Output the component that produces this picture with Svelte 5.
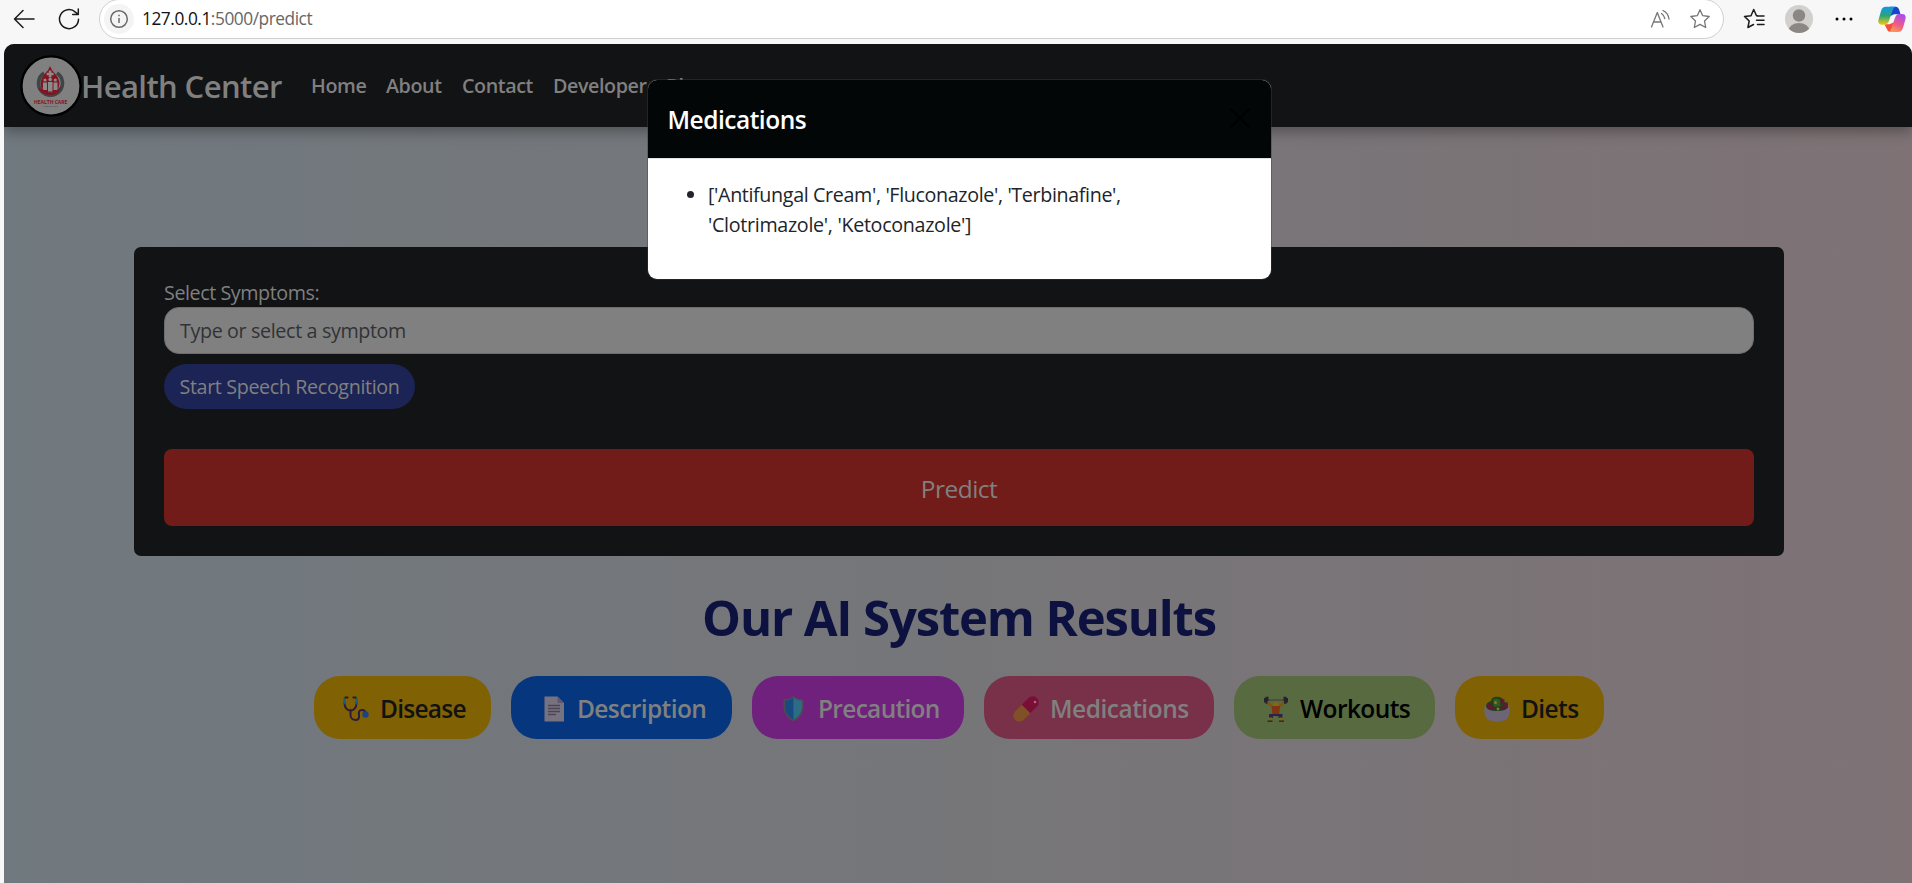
<script lang="ts">
  const nav = [
    { t: 'Home', w: 55 },
    { t: 'About', w: 56 },
    { t: 'Contact', w: 71 },
    { t: 'Developer', w: 93 },
    { t: 'Blog', w: 42 },
  ];
  const pills = [
    { t: 'Disease', c: 'disease', icon: 'steth' },
    { t: 'Description', c: 'description', icon: 'doc' },
    { t: 'Precaution', c: 'precaution', icon: 'shield' },
    { t: 'Medications', c: 'medications', icon: 'pill' },
    { t: 'Workouts', c: 'workouts', icon: 'lift' },
    { t: 'Diets', c: 'diets', icon: 'salad' },
  ];
</script>

<div class="window">
  <header class="toolbar">
    <svg class="ic back" width="22" height="20" viewBox="0 0 22 20"><path d="M21 10H1.5M10 1.5 1.5 10l8.500 8.500" /></svg>
    <svg class="ic reload" width="22" height="22" viewBox="0 0 22 22"><path d="M20.500 11.200A9.500 9.500 0 1 1 17.400 4.100L20 6.300M20.300 1v5.500h-5.600" /></svg>
    <div class="address">
      <span class="info"><svg width="20" height="20" viewBox="0 0 20 20"><circle cx="10" cy="10" r="8.300" /><path d="M10 9v5M10 5.700v1.600" /></svg></span>
      <span class="url"><b>127.0.0.1</b>:5000/predict</span>
      <svg class="read" width="20" height="20" viewBox="0 0 20 20"><path d="M1.500 18 7.300 3.500 13 18M3.500 13h7.500M11.500 4.500a8 8 0 0 1 3.300 5M13 1.500a11 11 0 0 1 6 8.500" /></svg>
      <svg class="star" width="22" height="22" viewBox="0 0 22 22"><path d="m11 1.800 2.700 5.900 6.500.8-4.700 4.500 1.200 6.500-5.700-3.100-5.700 3.100 1.200-6.500L1.800 8.500l6.500-.8z" /></svg>
    </div>
    <svg class="ic favs" width="22" height="22" viewBox="0 0 22 22"><path d="M14.500 7.800h-1L10.700 1.500 8 7.700l-6.500.7 4.700 4.600-1.300 6.500 5.600-3M14 8h7M13.500 12.200H21M14.500 16.500H21" /></svg>
    <svg class="avatar" width="28" height="28" viewBox="0 0 28 28"><defs><clipPath id="av"><circle cx="14" cy="14" r="14" /></clipPath></defs><g clip-path="url(#av)"><path fill="#d2d0cd" d="M0 0h28v28H0z" /><circle cx="14" cy="10.500" r="6.200" fill="#8b8785" /><ellipse cx="14" cy="26" rx="10.500" ry="8" fill="#8b8785" /></g></svg>
    <svg class="dots" width="18" height="4" viewBox="0 0 18 4"><circle cx="2" cy="2" r="1.500" /><circle cx="9" cy="2" r="1.500" /><circle cx="16" cy="2" r="1.500" /></svg>
    <svg class="copilot" width="28" height="27" viewBox="0 0 28 27">
      <defs>
        <linearGradient id="ca" x1="0" y1="0" x2="0" y2="1"><stop offset="0" stop-color="#1495e8" /><stop offset=".5" stop-color="#2aa57a" /><stop offset="1" stop-color="#f4c90c" /></linearGradient>
        <linearGradient id="cb" x1=".7" y1="0" x2=".3" y2="1"><stop offset="0" stop-color="#a54df0" /><stop offset=".55" stop-color="#ee5a8c" /><stop offset="1" stop-color="#ff9a4c" /></linearGradient>
      </defs>
      <path fill="#1747c8" d="M12 .8h6q2.200 0 3 2.500l1.500 5h-6.500l-4 2z" />
      <path fill="#f0503c" d="M6.500 18.200h5l4.500-2-2 9.800h-2q-2.300 0-3-2.700z" />
      <path fill="url(#ca)" d="M8 .8h9.500q-2 .4-3 4l-3.500 10q-1.200 3.900-4.500 3.900H4Q-.5 18.700.5 13.700L3 5Q4.200.8 8 .8z" />
      <path fill="url(#cb)" d="M20 26h-9.500q2-.4 3-4L17 11.800q1.200-3.900 4.500-3.900H24q4.400 0 3.500 5L25 21.800Q23.800 26 20 26z" />
    </svg>
  </header>

  <div class="page">
    <nav class="navbar">
      <svg class="logo" width="62" height="62" viewBox="0 0 62 62">
        <circle cx="31" cy="31" r="29.600" fill="#808080" stroke="#000" stroke-width="2.400" />
        <path d="M24 18a12 12 0 1 0 13 0" fill="none" stroke="#3f4446" stroke-width="3.600" />
        <path fill="#82131f" d="M30 11q1.200 3.500 4.500 7 5 5.500 5 10.500a9.500 9.500 0 0 1-19 0q0-5 5-10.500Q29 14.500 30 11z" />
        <path fill="#8b8b8b" d="M28.800 15.500h2.600v2.200h2.200v2.600h-2.200v2.200h-2.600v-2.200h-2.200v-2.600h2.200z" />
        <g fill="#8b8b8b"><circle cx="25" cy="25" r="1.600" /><circle cx="30.200" cy="24.500" r="1.800" /><circle cx="35.300" cy="25" r="1.600" /><path d="M23 27.500h4v7.500h-4zM28 27h4.500v9.500H28zM33.500 27.500h4v7.500h-4z" /></g>
        <path d="M18 33q8 2 11 5 6 0 12-7-2 9-11 9-8 0-12-7z" fill="#82131f" />
        <text x="30.500" y="48.500" text-anchor="middle" class="logo-name" textLength="33">HEALTH CARE</text>
        <text x="30.500" y="52.300" text-anchor="middle" class="logo-tag" textLength="15">Medical Clinic</text>
      </svg>
      <span class="brand">Health Center</span>
      <div class="links">
        {#each nav as n}<a href="#top" style="width:{n.w}px">{n.t}</a>{/each}
      </div>
    </nav>

    <main>
      <section class="card">
        <span class="label">Select Symptoms:</span>
        <div class="field">Type or select a symptom</div>
        <button class="speech">Start Speech Recognition</button>
        <button class="predict">Predict</button>
      </section>

      <h1>Our AI System Results</h1>

      <div class="pills">
        {#each pills as p}
          <button class="pill {p.c}">
            <svg width="26" height="26" viewBox="0 0 26 26">
              {#if p.icon === 'steth'}
                <g fill="none" stroke-linecap="round">
                  <path stroke="#2d1c3f" stroke-width="2" d="M7.500 14v5a5 5 0 0 0 5 5c3 0 4-2 3.500-5s0-5 3-5 3.500 2 3.500 4" />
                  <path stroke="#2d1c3f" stroke-width="2" d="M1.500 7c0 5 3 7.500 6 7.500s6-2.500 6-7.500" />
                  <path stroke="#1d5a80" stroke-width="2.200" d="M1.500 7.500v-5M13.500 7.500v-5" />
                  <path stroke="#222" stroke-width="2.200" d="M2.500 1.500h2M10.500 1.500h2" />
                </g>
                <circle cx="22.500" cy="18.500" r="3.200" fill="#1b4387" />
              {:else if p.icon === 'doc'}
                <path fill="#77727f" d="M.5.500h13L20 7v18.500H.5z" /><path fill="#5e586a" d="M13.500.5 20 7h-6.500z" />
                <path stroke="#4b4558" stroke-width="1.300" d="M4 9.500h12M4 12.500h12M4 15.500h12M4 18.500h8" />
              {:else if p.icon === 'shield'}
                <path fill="#4f4b50" d="M10.500 0Q14 3 20.500 3.500V12q-1 9-10 13.500Q1.500 21 .5 12V3.500Q7 3 10.500 0z" />
                <path fill="#174c81" d="M10.500 1.800v22Q3 19.500 2 12V4.800q5-.3 8.500-3z" /><path fill="#2c6c87" d="M10.500 1.800v22Q18 19.500 19 12V4.800q-5-.3-8.500-3z" />
              {:else if p.icon === 'pill'}
                <g transform="rotate(45 13 13)">
                  <path fill="#7a0f36" d="M7 13V3.500a6 6 0 0 1 12 0V13z" /><path fill="#805027" d="M7 13v9.500a6 6 0 0 0 12 0V13z" />
                </g>
                <circle cx="22" cy="6" r="1.300" fill="#a66c85" />
              {:else if p.icon === 'lift'}
                <path stroke="#44404a" stroke-width="1.200" d="M2 4h22" /><path fill="#26222d" d="M1 2h1.500V.8h3v7h-3V6.500H1zM25 2h-1.500V.8h-3v7h3V6.500H25z" />
                <path fill="none" stroke="#80540f" stroke-width="2.200" d="M5.500 5v3l4 2.500M20 5v3l-4 2.500" />
                <circle cx="12.800" cy="8.500" r="2.800" fill="#86651a" /><path fill="#803510" d="M8.500 10h8.600l-1 8.500H9.500z" />
                <path fill="#29234a" d="M6 18h13.500v4h-4v-2h-5.500v2H6z" /><path fill="#80650f" d="M6 21.500h3.200V25H6zM16.300 21.500h3.200V25h-3.200z" /><path fill="#222" d="M4.500 24.500h5v1.300h-5zM16 24.500h5v1.300h-5z" />
              {:else}
                <path fill="#6d6576" d="M.5 10q2-1.500 12.500-1.500T25.500 10q1 11-4 14-3.500 1.800-8.500 1.800T4.500 24q-5-3-4-14z" />
                <path fill="#1f3f1d" d="M2 10.500q0-4 5-5.500 1-4.200 6-4.200T19 5q5 1.500 5 5.500-1 4.500-11 4.500T2 10.500z" />
                <path fill="#2d5b25" d="M9 4q3-3 7 0l1 6-7 1z" />
                <path fill="#6a1434" d="m3.500 7 9 5.500-8 .5zM23.500 5.500 16 13l8-1zM17 2l4 2-5 5z" /><circle cx="11.500" cy="6.500" r="1.500" fill="#8a7a20" /><circle cx="14" cy="13" r="1.400" fill="#8a7a20" />
              {/if}
            </svg>
            <span>{p.t}</span>
          </button>
        {/each}
      </div>
    </main>

    <div class="modal">
      <div class="modal-head">
        <span>Medications</span>
        <svg width="22" height="20" viewBox="0 0 22 20"><path d="m1.500.5 19 19m0-19-19 19" /></svg>
      </div>
      <ul><li><span class="l1">['Antifungal Cream', 'Fluconazole', 'Terbinafine',</span><br /><span class="l2">'Clotrimazole', 'Ketoconazole']</span></li></ul>
    </div>
  </div>
</div>

<style>
  :global(body) { margin: 0; background: #f7f7f7; overflow: hidden; }
  .window { width: 1912px; height: 883px; display: flex; flex-direction: column; font-family: "Open Sans", "Noto Sans", sans-serif; font-size: 19.700px; letter-spacing: -.36px; }
  .window *, .window { box-sizing: border-box; }
  button { border: 0; margin: 0; padding: 0; font: inherit; letter-spacing: inherit; }
  .toolbar { height: 44px; flex: none; display: flex; align-items: center; padding: 0 0 6px 13px; background: #f7f7f7; }
  .toolbar svg { flex: none; }
  .ic path, .read path, .star path { fill: none; stroke: #1b1b1b; stroke-width: 1.500; stroke-linecap: round; stroke-linejoin: round; }
  .reload { margin-left: 23px; }
  .address { margin-left: 19px; width: 1625px; height: 40px; margin-top: -1px; border: 1.500px solid #d0d0d0; border-radius: 20px; background: #fff; display: flex; align-items: center; padding-left: 4px; }
  .info { width: 30px; height: 30px; border-radius: 50%; background: #f4f4f4; display: grid; place-items: center; }
  .info svg { fill: none; stroke: #6a6a6a; stroke-width: 1.500; }
  .url { margin-left: 8px; color: #666; font-size: 17.300px; letter-spacing: -.45px; }
  .url b { font-weight: 400; color: #111; }
  .read { margin-left: auto; }
  .read path, .star path { stroke: #767676; stroke-width: 1.300; }
  .star { margin: 0 12px 0 19px; }
  .favs { margin-left: 19px; }
  .avatar { margin-left: 20px; }
  .dots { margin-left: 22px; }
  .copilot { margin-left: 25px; }
  .page { position: relative; flex: 1; margin-left: 4px; border-radius: 10px 10px 0 0; overflow: hidden; background: linear-gradient(to right, #70797f, #767679 50%, #7e7275); }
  .navbar { height: 83px; background: #111315; display: flex; align-items: center; padding-left: 16px; box-shadow: 0 5px 12px rgba(0, 0, 0, .3); color: #808080; }
  .logo { flex: none; margin: 0 1px 0 -.5px; }
  .brand { width: 230px; margin-left: -1.500px; font-size: 31px; font-weight: 600; letter-spacing: -.6px; white-space: nowrap; }
  .logo-name { font: 700 5px "Open Sans", sans-serif; fill: #82131f; }
  .logo-tag { font: 2.500px "Open Sans", sans-serif; fill: #444; }
  .links { display: flex; gap: 20px; }
  .links a { color: inherit; text-decoration: none; font-size: 19.700px; font-weight: 600; letter-spacing: -.4px; white-space: nowrap; padding-bottom: 1px; }
  main { display: flex; flex-direction: column; align-items: center; padding: 120px 0 0 2px; }
  .card { width: 1650px; height: 309px; border-radius: 7px; background: #111315; padding: 30px; display: flex; flex-direction: column; align-items: flex-start; color: #808080; }
  .label { height: 30px; line-height: 32px; letter-spacing: -.42px; }
  .field { width: 100%; height: 47px; border: 1px solid #6b6d6f; border-radius: 15px; background: #808080; color: #303336; padding-left: 15px; line-height: 46px; }
  .speech { margin-top: 10px; width: 251px; height: 45px; border-radius: 23px; background: #1c2455; color: #808080; }
  .predict { margin-top: 40px; width: 100%; height: 77px; border-radius: 8px; background: #711c19; color: #808080; font-size: 24.500px; letter-spacing: -.5px; padding: 2px 0 0; }
  h1 { margin: 27px 0 0; height: 68px; line-height: 68px; font-size: 49px; font-weight: 700; letter-spacing: -1.130px; color: #0d113f; white-space: nowrap; }
  .pills { margin-top: 25px; display: flex; gap: 20px; }
  .pill { height: 63px; border-radius: 26px; display: flex; align-items: center; padding-left: 30px; font-size: 24.500px; font-weight: 600; letter-spacing: -.6px; color: #808080; white-space: nowrap; }
  .pill svg { flex: none; margin: 3px 0 0 -1px; }
  .pill span { margin-left: 11px; padding-top: 2px; }
  .disease { width: 177px; background: #806103; color: #101214; letter-spacing: -.75px; }
  .description { width: 221px; background: #06377e; padding-left: 34px; }
  .description span { margin-left: 7px; }
  .precaution { width: 212px; background: #70207d; padding-left: 32px; letter-spacing: -.7px; }
  .precaution span { margin-left: 9px; }
  .medications { width: 230px; background: #783149; letter-spacing: -.5px; }
  .workouts { width: 201px; background: #576a40; color: #000; }
  .diets { width: 149px; background: #806103; color: #101214; }
  .modal { position: absolute; left: 644px; top: 36px; width: 623px; height: 199px; border-radius: 9px; overflow: hidden; background: #fff; box-shadow: 0 0 0 1px rgba(60, 62, 64, .4); }
  .modal-head { height: 79px; background: #020607; border-bottom: 1px solid #dee2e6; display: flex; align-items: center; justify-content: space-between; padding: 0 20px 0 19.500px; color: #fff; font-size: 24.500px; font-weight: 600; letter-spacing: -.5px; }
  .modal-head svg { stroke: #000; stroke-width: 1.800; margin-top: -2px; }
  ul { margin: 0; padding: 21px 0 0 60px; color: #212529; line-height: 30px; white-space: nowrap; }
  .l2 { letter-spacing: -.31px; }
</style>
